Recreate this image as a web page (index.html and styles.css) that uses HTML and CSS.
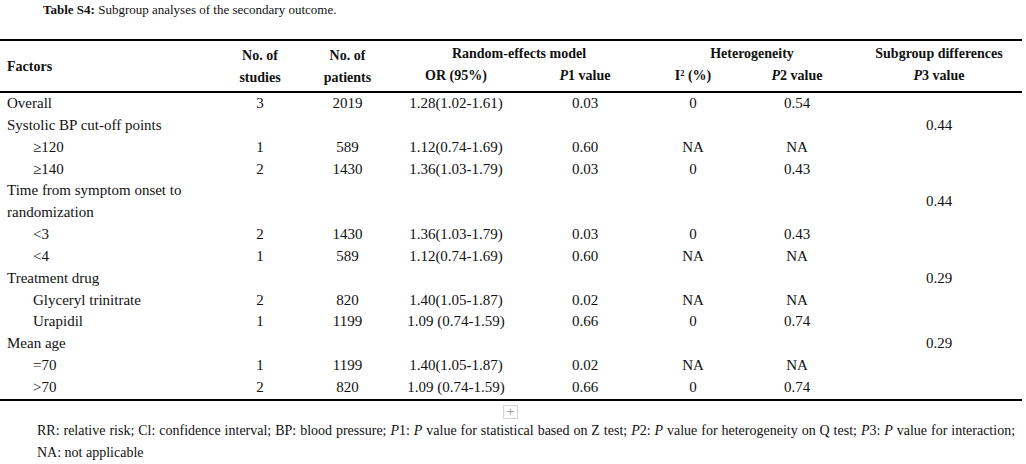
FILE: index.html
```html
<!DOCTYPE html>
<html>
<head>
<meta charset="utf-8">
<link rel="stylesheet" href="styles.css">
</head>
<body>
<div class="page">
  <p class="title"><b>Table S4:</b> Subgroup analyses of the secondary outcome.</p>
  <table class="tbl">
    <colgroup>
      <col class="c-factor"><col class="c-studies"><col class="c-patients"><col class="c-or"><col class="c-p1"><col class="c-i2"><col class="c-p2"><col class="c-p3">
    </colgroup>
    <thead>
      <tr class="h1">
        <th class="left" rowspan="2">Factors</th>
        <th rowspan="2">No. of<br>studies</th>
        <th rowspan="2">No. of<br>patients</th>
        <th colspan="2">Random-effects model</th>
        <th colspan="2">Heterogeneity</th>
        <th>Subgroup differences</th>
      </tr>
      <tr class="h2">
        <th>OR (95%)</th>
        <th><i>P</i>1 value</th>
        <th>I² (%)</th>
        <th><i>P</i>2 value</th>
        <th><i>P</i>3 value</th>
      </tr>
    </thead>
    <tbody>
      <tr><td class="left">Overall</td><td>3</td><td>2019</td><td>1.28(1.02-1.61)</td><td>0.03</td><td>0</td><td>0.54</td><td></td></tr>
      <tr><td class="left">Systolic BP cut-off points</td><td></td><td></td><td></td><td></td><td></td><td></td><td>0.44</td></tr>
      <tr><td class="left sub">≥120</td><td>1</td><td>589</td><td>1.12(0.74-1.69)</td><td>0.60</td><td>NA</td><td>NA</td><td></td></tr>
      <tr><td class="left sub">≥140</td><td>2</td><td>1430</td><td>1.36(1.03-1.79)</td><td>0.03</td><td>0</td><td>0.43</td><td></td></tr>
      <tr><td class="left">Time from symptom onset to<br>randomization</td><td></td><td></td><td></td><td></td><td></td><td></td><td>0.44</td></tr>
      <tr><td class="left sub">&lt;3</td><td>2</td><td>1430</td><td>1.36(1.03-1.79)</td><td>0.03</td><td>0</td><td>0.43</td><td></td></tr>
      <tr><td class="left sub">&lt;4</td><td>1</td><td>589</td><td>1.12(0.74-1.69)</td><td>0.60</td><td>NA</td><td>NA</td><td></td></tr>
      <tr><td class="left">Treatment drug</td><td></td><td></td><td></td><td></td><td></td><td></td><td>0.29</td></tr>
      <tr><td class="left sub">Glyceryl trinitrate</td><td>2</td><td>820</td><td>1.40(1.05-1.87)</td><td>0.02</td><td>NA</td><td>NA</td><td></td></tr>
      <tr><td class="left sub">Urapidil</td><td>1</td><td>1199</td><td>1.09 (0.74-1.59)</td><td>0.66</td><td>0</td><td>0.74</td><td></td></tr>
      <tr><td class="left">Mean age</td><td></td><td></td><td></td><td></td><td></td><td></td><td>0.29</td></tr>
      <tr><td class="left sub">=70</td><td>1</td><td>1199</td><td>1.40(1.05-1.87)</td><td>0.02</td><td>NA</td><td>NA</td><td></td></tr>
      <tr><td class="left sub">&gt;70</td><td>2</td><td>820</td><td>1.09 (0.74-1.59)</td><td>0.66</td><td>0</td><td>0.74</td><td></td></tr>
    </tbody>
  </table>
  <div class="expand"><span class="plus">+</span></div>
  <div class="notes">
    <span class="line1">RR: relative risk; Cl: confidence interval; BP: blood pressure; <i>P</i>1: <i>P</i> value for statistical based on Z test; <i>P</i>2: <i>P</i> value for heterogeneity on Q test; <i>P</i>3: <i>P</i> value for interaction;</span>
    <span class="line2">NA: not applicable</span>
  </div>
</div>
</body>
</html>
```

FILE: styles.css
```css
html, body {
  margin: 0;
  padding: 0;
  background: #ffffff;
}

.page {
  font-family: "Liberation Serif", "Times New Roman", serif;
  color: #111111;
  font-size: 13px;
}

.title {
  margin: 0;
  padding: 2px 0 0 43px;
  font-size: 13px;
  line-height: 16px;
}

.tbl {
  margin-top: 21px;
  width: 1022px;
  border-collapse: collapse;
  table-layout: fixed;
  border-top: 2px solid #000;
  border-bottom: 2px solid #000;
  font-family: "Liberation Serif", "Times New Roman", serif;
  color: #111111;
}

.c-factor { width: 215px; }
.c-studies { width: 90px; }
.c-patients { width: 85px; }
.c-or { width: 132px; }
.c-p1 { width: 126px; }
.c-i2 { width: 90px; }
.c-p2 { width: 118px; }
.c-p3 { width: 166px; }

.tbl thead {
  border-bottom: 2px solid #000;
}

.tbl th {
  font-weight: bold;
  font-size: 14px;
  line-height: 22px;
  padding: 0;
  text-align: center;
  vertical-align: middle;
}

.tbl .h1 th { padding-top: 2px; }
.tbl .h2 th { padding-bottom: 4px; }

.tbl td {
  padding: 0;
  font-size: 15px;
  line-height: 21.85px;
  text-align: center;
  vertical-align: middle;
  white-space: nowrap;
}

.tbl .left {
  text-align: left;
  padding-left: 7px;
}

.tbl td.sub {
  padding-left: 33px;
}

.expand {
  display: flex;
  justify-content: flex-start;
  padding: 4px 0 0 503px;
}

.plus {
  display: inline-flex;
  align-items: center;
  justify-content: center;
  width: 13px;
  height: 12px;
  border: 1px solid #d4d4d4;
  color: #9a9a9a;
  font-family: "DejaVu Sans", sans-serif;
  font-size: 10px;
  line-height: 10px;
}

.notes {
  padding: 1px 11px 0 37px;
  font-size: 14px;
  line-height: 22px;
}

.notes .line1 {
  display: block;
  text-align: justify;
  text-align-last: justify;
}

.notes .line2 {
  display: block;
}
```
